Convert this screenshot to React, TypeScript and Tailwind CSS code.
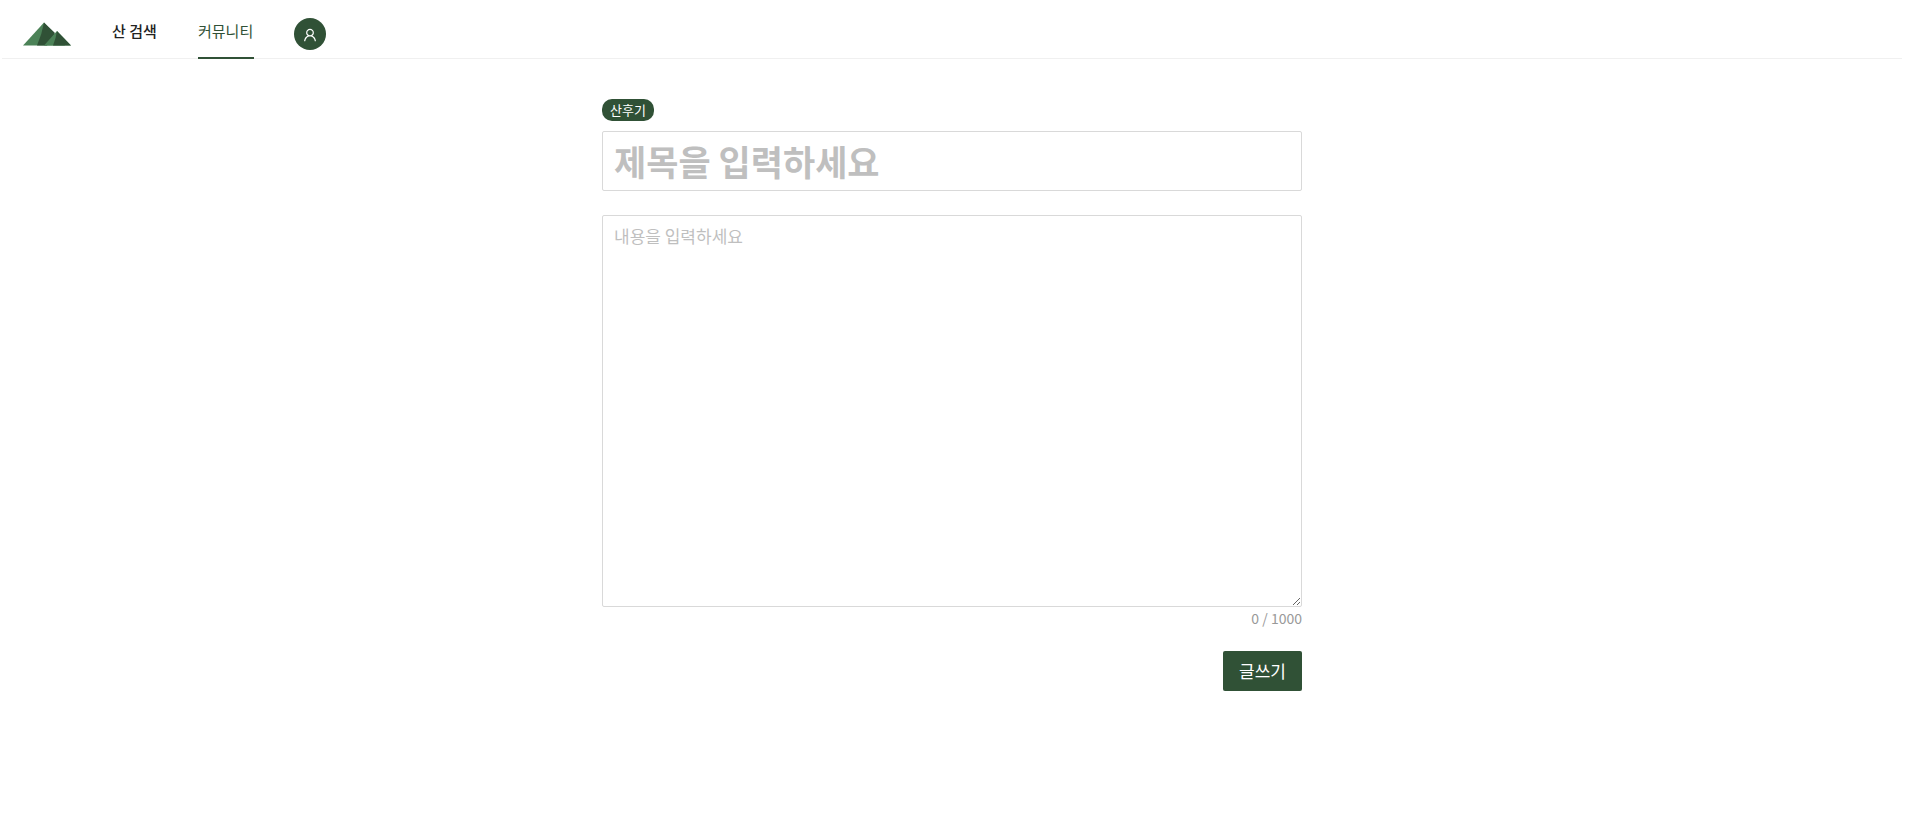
import { useState } from "react";
import { AiOutlineUser } from "react-icons/ai";

const MAX_LENGTH = 1000;

function Logo() {
	return (
		<svg viewBox="0 0 50 26" className="w-[50px] h-[26px]" aria-hidden="true">
			<path d="M1 24.500 L22 1.500 L43 24.500 Z" fill="#4b8257" />
			<path d="M22 1.500 L33 12 L25 24.500 H15 Q20 13 22 1.500 Z" fill="#305136" />
			<path d="M22 24.500 L35 10 L49 24.500 Z" fill="#4b8257" />
			<path d="M35 10 L49 24.500 H31 Q34 17 35 10 Z" fill="#305136" />
		</svg>
	);
}

function Header() {
	return (
		<header className="flex items-start h-[59px] pl-5 border-b border-[#f0f0f0]">
			<a href="#home" aria-label="홈" className="mt-[21px]">
				<Logo />
			</a>
			<nav className="flex items-start h-[59px] gap-10 ml-10 text-[15px] leading-[62px]">
				<a href="#search" className="w-[46px] h-[59px] font-medium whitespace-nowrap text-[#222222]">
					산 검색
				</a>
				<a href="#community" className="w-14 h-[59px] border-b-2 border-[#305136] text-[#305136]">
					커뮤니티
				</a>
				<button aria-label="내 정보" className="flex items-center justify-center w-8 h-8 pt-0.5 mt-[18px] rounded-full bg-[#305136] text-white">
					<AiOutlineUser className="w-4 h-4" />
				</button>
			</nav>
		</header>
	);
}

export default function App() {
	const [title, setTitle] = useState("");
	const [content, setContent] = useState("");

	return (
		<div className="pl-0.5 pr-1.5 bg-white font-['Noto_Sans_CJK_KR',sans-serif]">
			<Header />
			<main className="flex flex-col items-start w-full max-w-[700px] pt-10 mx-auto">
				<span className="h-[22px] px-2 text-[13px] leading-[22px] text-white rounded-[10px] bg-[#305136]">산후기</span>
				<input
					aria-label="제목"
					value={title}
					onChange={(e) => setTitle(e.target.value)}
					placeholder="제목을 입력하세요"
					className="w-full h-[60px] px-[11px] pb-0.5 mt-2.5 text-[35px] font-bold border border-[#d9d9d9] rounded-xs outline-none placeholder:text-[#bfbfbf]"
				/>
				<textarea
					aria-label="내용"
					value={content}
					maxLength={MAX_LENGTH}
					onChange={(e) => setContent(e.target.value)}
					placeholder="내용을 입력하세요"
					className="block w-full h-[392px] px-[11px] py-2 mt-6 text-[17px] leading-6 border border-[#d9d9d9] rounded-xs outline-none placeholder:text-[#bfbfbf]"
				/>
				<p className="self-end text-sm leading-[22px] text-[#999999]">
					{content.length} / {MAX_LENGTH}
				</p>
				<button className="self-end h-10 px-4 mt-[22px] text-[17px] text-white rounded-xs bg-[#305136] shadow-[0_2px_0_rgba(0,0,0,0.045)]">
					글쓰기
				</button>
			</main>
		</div>
	);
}
